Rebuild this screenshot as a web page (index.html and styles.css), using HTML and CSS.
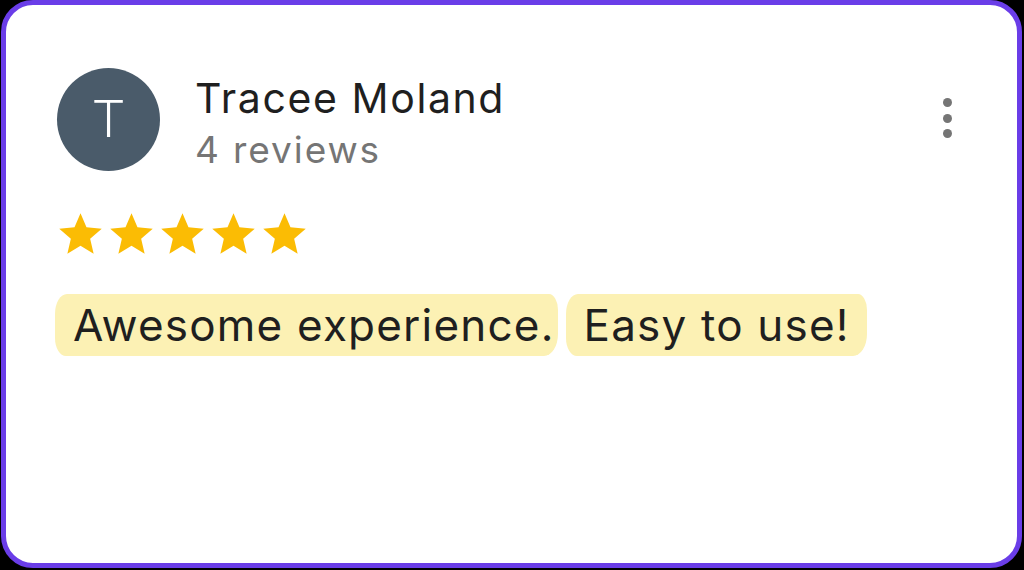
FILE: index.html
```html
<!DOCTYPE html>
<html lang="en">
<head>
<meta charset="utf-8">
<title>Review</title>
<link rel="stylesheet" href="styles.css">
</head>
<body>
<div class="card">
  <div class="header">
    <div class="avatar">T</div>
    <div class="info">
      <div class="name">Tracee Moland</div>
      <div class="count">4 reviews</div>
    </div>
    <div class="kebab"><span></span><span></span><span></span></div>
  </div>
  <div class="stars">
    <svg viewBox="0 0 24 24"><path d="M12 17.27L18.18 21l-1.64-7.03L22 9.24l-7.19-.61L12 2 9.19 8.63 2 9.24l5.46 4.73L5.82 21z"/></svg>
    <svg viewBox="0 0 24 24"><path d="M12 17.27L18.18 21l-1.64-7.03L22 9.24l-7.19-.61L12 2 9.19 8.63 2 9.24l5.46 4.73L5.82 21z"/></svg>
    <svg viewBox="0 0 24 24"><path d="M12 17.27L18.18 21l-1.64-7.03L22 9.24l-7.19-.61L12 2 9.19 8.63 2 9.24l5.46 4.73L5.82 21z"/></svg>
    <svg viewBox="0 0 24 24"><path d="M12 17.27L18.18 21l-1.64-7.03L22 9.24l-7.19-.61L12 2 9.19 8.63 2 9.24l5.46 4.73L5.82 21z"/></svg>
    <svg viewBox="0 0 24 24"><path d="M12 17.27L18.18 21l-1.64-7.03L22 9.24l-7.19-.61L12 2 9.19 8.63 2 9.24l5.46 4.73L5.82 21z"/></svg>
  </div>
  <div class="review">
    <span class="hl hl-a">Awesome experience.</span><span class="hl hl-b">Easy to use!</span>
  </div>
</div>
</body>
</html>
```
FILE: styles.css
```css
html, body {
  margin: 0;
  padding: 0;
  background: #000;
  height: 100%;
  overflow: hidden;
}
.card {
  box-sizing: border-box;
  width: 1021px;
  height: 568px;
  margin-left: 1px;
  background: #fff;
  border: 5px solid #6a3de8;
  border-radius: 32px;
  padding: 63px 0 0 51px;
  font-family: Inter, Roboto, sans-serif;
}
.header {
  display: flex;
  align-items: flex-start;
}
.avatar {
  width: 103px;
  height: 103px;
  border-radius: 50%;
  background: #4a5b6a;
  color: #fff;
  font-family: Roboto, sans-serif;
  font-size: 52px;
  font-weight: 300;
  display: flex;
  align-items: center;
  justify-content: center;
  flex: none;
}
.info {
  margin-left: 35px;
  margin-top: 5px;
  flex: 1;
}
.name {
  font-size: 41px;
  line-height: 50px;
  letter-spacing: 1.6px;
  color: #1f1f1f;
}
.count {
  font-size: 37px;
  line-height: 46px;
  letter-spacing: 1.9px;
  margin-top: 4px;
  color: #757575;
}
.kebab {
  display: flex;
  flex-direction: column;
  gap: 6.5px;
  margin-top: 30px;
  margin-right: 65px;
}
.kebab span {
  width: 9px;
  height: 9px;
  border-radius: 50%;
  background: #757575;
}
.stars {
  display: flex;
  margin-top: 36px;
  margin-left: -2px;
}
.stars svg {
  width: 51px;
  height: 51px;
  fill: #fbbc04;
}
.review {
  display: flex;
  margin-top: 34px;
  margin-left: -2px;
  gap: 8px;
}
.hl {
  display: inline-block;
  background: #fcf1b4;
  font-size: 44px;
  line-height: 62px;
  letter-spacing: 1.2px;
  color: #1f1f1f;
  border-radius: 12px 9px 14px 11px / 20px 16px 22px 18px;
}
.hl-a {
  padding: 0 3px 0 18px;
}
.hl-b {
  padding: 0 17px 0 18px;
}
```
